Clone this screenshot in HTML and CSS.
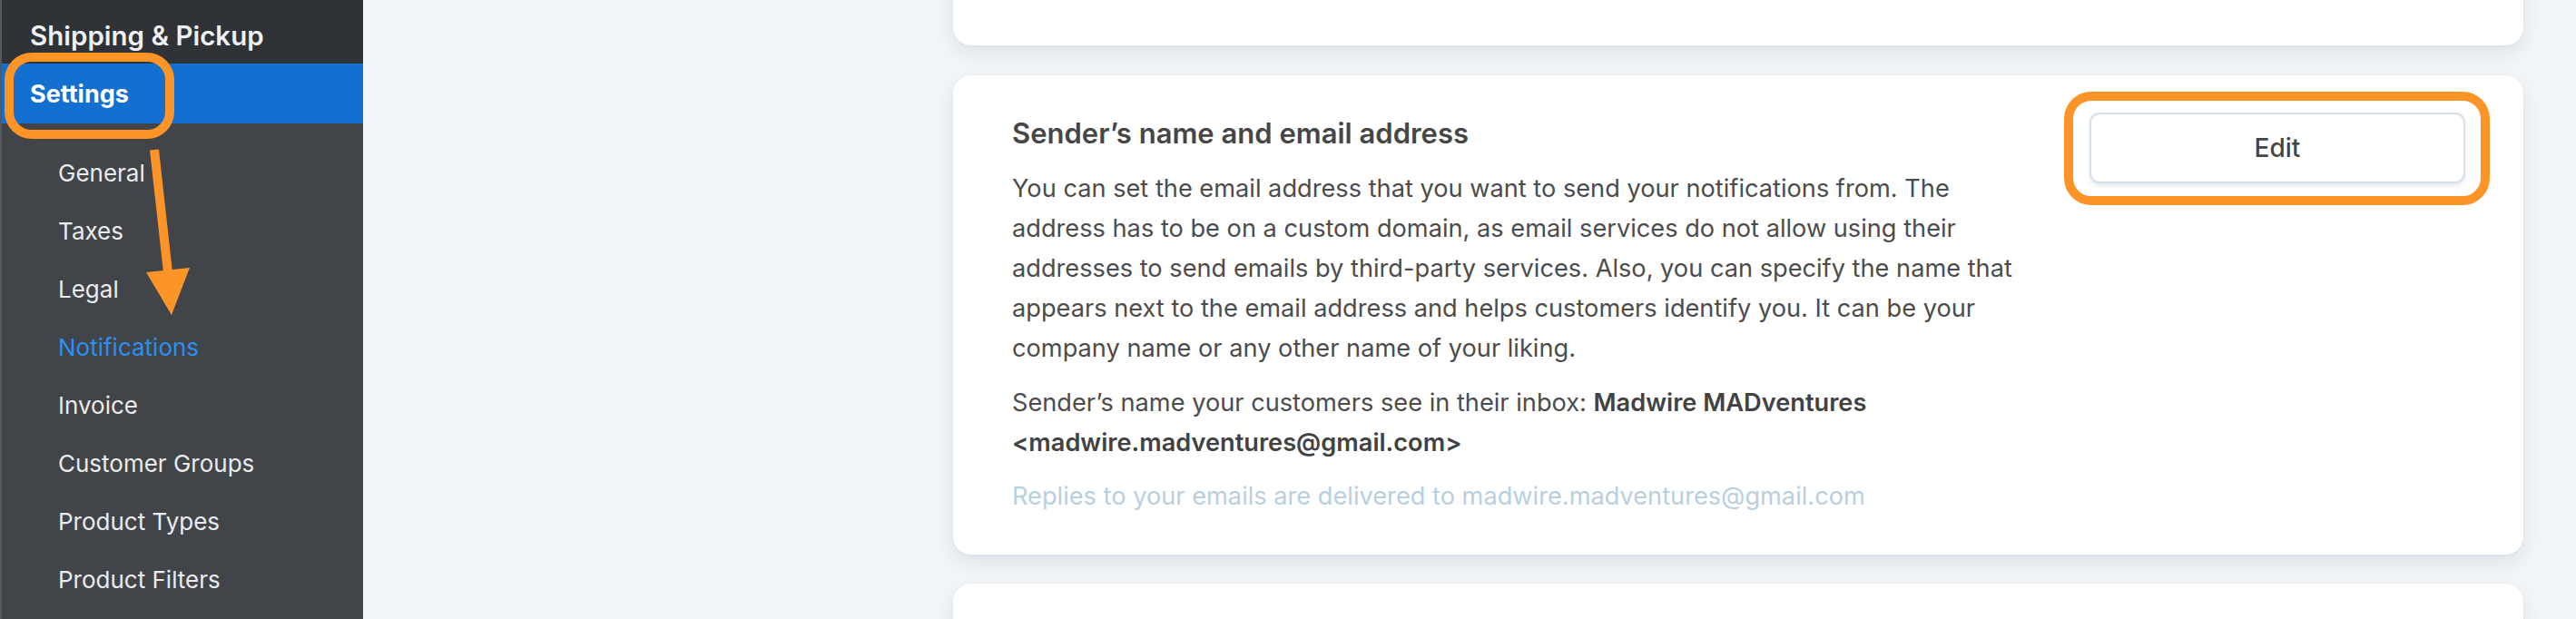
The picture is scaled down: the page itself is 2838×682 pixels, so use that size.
FILE: index.html
```html
<!DOCTYPE html>
<html lang="en">
<head>
<meta charset="utf-8">
<title>Notifications settings</title>
<link rel="stylesheet" href="styles.css">
</head>
<body>
<div class="app">
  <aside class="sidebar">
    <div class="nav-section">Shipping &amp; Pickup</div>
    <div class="nav-section nav-section--active">Settings</div>
    <ul class="subnav">
      <li class="subnav-item">General</li>
      <li class="subnav-item">Taxes</li>
      <li class="subnav-item">Legal</li>
      <li class="subnav-item subnav-item--active">Notifications</li>
      <li class="subnav-item">Invoice</li>
      <li class="subnav-item">Customer Groups</li>
      <li class="subnav-item">Product Types</li>
      <li class="subnav-item">Product Filters</li>
    </ul>
    <svg class="annotation" width="400" height="682" viewBox="0 0 400 682" aria-hidden="true">
      <rect x="10" y="63" width="177" height="85" rx="25" ry="25" fill="none" stroke="#fc9428" stroke-width="10"/>
      <line x1="170" y1="165" x2="185" y2="300" stroke="#fc9428" stroke-width="10"/>
      <polygon points="161,300 209,295 189,347" fill="#fc9428"/>
    </svg>
  </aside>
  <main class="main">
    <div class="cards">
      <section class="card card--above"></section>
      <section class="card card--sender">
        <div class="card-text">
          <h2 class="card-title">Sender’s name and email address</h2>
          <p class="card-para">You can set the email address that you want to send your notifications from. The address has to be on a custom domain, as email services do not allow using their addresses to send emails by third-party services. Also, you can specify the name that appears next to the email address and helps customers identify you. It can be your company name or any other name of your liking.</p>
          <p class="card-para">Sender’s name your customers see in their inbox: <strong>Madwire MADventures &lt;madwire.madventures@gmail.com&gt;</strong></p>
          <p class="card-para card-para--muted">Replies to your emails are delivered to madwire.madventures@gmail.com</p>
        </div>
        <div class="card-action">
          <button class="btn" type="button">Edit</button>
          <span class="highlight" aria-hidden="true"></span>
        </div>
      </section>
      <section class="card card--below"></section>
    </div>
  </main>
</div>
</body>
</html>
```

FILE: styles.css
```css
* {
  box-sizing: border-box;
}

html, body {
  margin: 0;
  padding: 0;
  height: 682px;
  overflow: hidden;
  font-family: "Inter", "Noto Sans", sans-serif;
}

.app {
  display: flex;
  height: 682px;
}

/* Sidebar */
.sidebar {
  position: relative;
  flex: 0 0 400px;
  width: 400px;
  background: #414549;
  border-left: 2px solid #56595d;
  color: #eef0f2;
}

.nav-section {
  background: #2f3236;
  height: 70px;
  padding: 19px 0 0 31px;
  font-size: 29.5px;
  font-weight: 600;
  line-height: 40px;
  color: #eef0f2;
}

.nav-section--active {
  background: #1470d0;
  height: 66px;
  padding-top: 2px;
  line-height: 64px;
  font-size: 27px;
  font-weight: 700;
  color: #ffffff;
}

.subnav {
  list-style: none;
  margin: 0;
  padding: 23px 0 0 0;
}

.subnav-item {
  height: 64px;
  line-height: 64px;
  padding-left: 62px;
  font-size: 26px;
  color: #e9ebed;
}

.subnav-item--active {
  color: #2b8ff2;
}

.annotation {
  position: absolute;
  top: 0;
  left: -2px;
}

/* Main */
.main {
  flex: 1;
  background: #f3f6f9;
  padding: 0 58px 0 650px;
  overflow: hidden;
}

.cards {
  display: flex;
  flex-direction: column;
  gap: 32px;
  margin-top: -150px;
}

.card {
  background: #ffffff;
  border-radius: 20px;
  box-shadow: 0 8px 22px rgba(30, 40, 50, 0.10), 0 1px 3px rgba(30, 40, 50, 0.04);
}

.card--above {
  height: 200px;
}

.card--below {
  height: 200px;
}

.card--sender {
  display: flex;
  align-items: flex-start;
  gap: 69px;
  padding: 41px 64px 42px 65px;
  margin-top: 1px;
}

.card-text {
  flex: 1;
  min-width: 0;
  color: #4c4c4c;
}

.card-title {
  margin: 0;
  font-size: 31px;
  font-weight: 600;
  line-height: 46px;
  color: #464646;
}

.card-para {
  margin: 16px 0 0;
  font-size: 27.2px;
  line-height: 44px;
}

.card-para strong {
  font-weight: 600;
  color: #424242;
}

.card-para--muted {
  margin-top: 15px;
  color: #b9cfe0;
}

.card-action {
  position: relative;
  flex: 0 0 414px;
}

.btn {
  display: block;
  width: 414px;
  height: 78px;
  background: #ffffff;
  border: 2px solid #d5e0ea;
  border-radius: 11px;
  box-shadow: 0 3px 5px rgba(120, 140, 160, 0.18);
  font-family: "Inter", "Noto Sans", sans-serif;
  font-size: 28px;
  font-weight: 500;
  color: #454545;
  cursor: pointer;
}

.highlight {
  position: absolute;
  top: -23px;
  left: -28px;
  right: -27px;
  bottom: -24px;
  border: 10px solid #fc9428;
  border-radius: 30px;
  pointer-events: none;
}
```
